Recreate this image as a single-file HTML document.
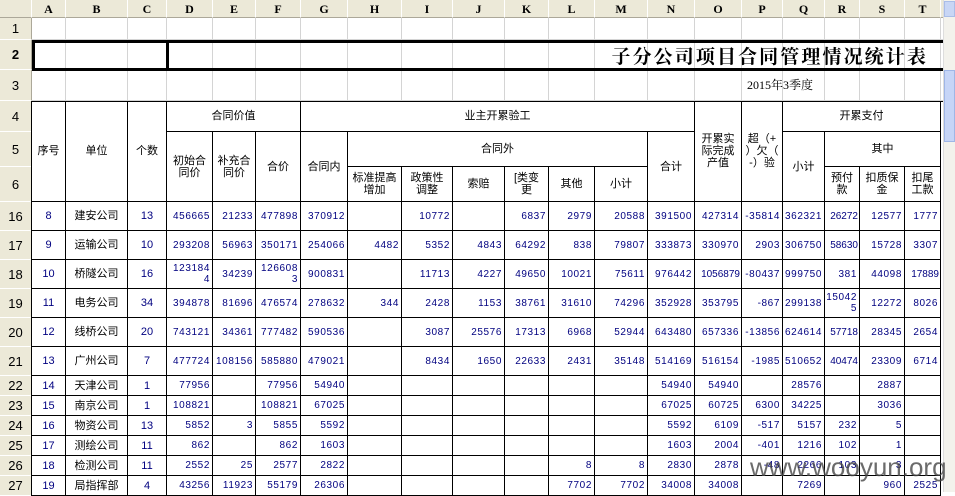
<!DOCTYPE html>
<html><head><meta charset="utf-8">
<style>
*{margin:0;padding:0;box-sizing:border-box}
body{width:955px;height:492px;overflow:hidden;background:#fff;position:relative;font-family:"Liberation Sans","Noto Sans CJK SC",sans-serif}
.a{position:absolute}
.ch{position:absolute;top:0;height:18px;background:#ece9d8;border-right:1px solid #fff;border-bottom:1px solid #aca899;font:bold 12px "Liberation Serif",serif;text-align:center;line-height:18px;color:#000}
.rh{position:absolute;left:0;width:32px;background:#ece9d8;border-bottom:1px solid #fff;border-right:1px solid #aca899;font:13px "Liberation Sans",sans-serif;text-align:center;color:#000;display:flex;align-items:center;justify-content:center}
.c{position:absolute;border-right:1px solid #000;border-bottom:1px solid #000;display:flex;align-items:center;justify-content:center;text-align:center;font-size:11px;line-height:12px;color:#000;font-family:"Liberation Sans","Noto Sans CJK SC",sans-serif}
.b{color:#000080}
.n{position:absolute;border-right:1px solid #000;border-bottom:1px solid #000;display:flex;align-items:center;justify-content:flex-end;text-align:right;padding-right:2px;font-size:10px;line-height:11px;color:#000080;letter-spacing:0.6px;font-family:"Liberation Sans",sans-serif;white-space:nowrap;overflow:hidden}
.g{position:absolute;background:#d4d4d4}
.title{position:absolute;left:560px;top:43px;width:368px;height:25px;font-weight:bold;font-size:19px;font-family:"Noto Serif CJK SC","Noto Sans CJK SC",serif;letter-spacing:2.1px;text-align:right;line-height:25px;color:#000;white-space:nowrap}
.yr{position:absolute;left:700px;top:76px;width:160px;height:18px;font-size:12px;font-family:"Liberation Serif","Noto Serif CJK SC",serif;text-align:center;color:#000;line-height:18px}
.wm{position:absolute;left:750px;top:449px;width:205px;height:36px;font-size:26px;font-family:"Liberation Sans",sans-serif;color:rgba(70,70,70,0.8);white-space:nowrap;line-height:36px}
</style></head><body>
<div id="root"></div>
<div class="title">子分公司项目合同管理情况统计表</div>
<div class="yr">2015年3季度</div>
<div class="wm">www.wooyun.org</div>
<script>
var xs=[32,66,128,167,213,256,301,348,402,453,505,549,595,648,695,742,783,825,860,905,941];
var L="ABCDEFGHIJKLMNOPQRST";
var h='';
function d(cls,x,y,w,hh,t,st){h+='<div class="'+cls+'" style="left:'+x+'px;top:'+y+'px;width:'+w+'px;height:'+hh+'px;'+(st||'')+'">'+(t||'')+'</div>';}
d('ch',0,0,32,18,'');
for(var i=0;i<20;i++)d('ch',xs[i],0,xs[i+1]-xs[i],18,L[i]);
d('ch',941,0,4,18,'');
for(var i=0;i<21;i++)d('g',xs[i]-1,18,1,83);
d('g',32,39,913,1);d('g',32,100,913,1);
var rh=[[1,18,40],[2,40,70],[3,70,101],[4,101,132],[5,132,167],[6,167,202]];
var dys=[202,231,260,289,318,347,376,396,416,436,456,476,496];
for(var i=0;i<12;i++)rh.push([16+i,dys[i],dys[i+1]]);
rh.forEach(function(r){d('rh',0,r[1],32,r[2]-r[1],''+r[0],r[0]==2?'font-weight:bold':'');});
d('a',32,40,911,3,'','background:#000');d('a',32,68,911,3,'','background:#000');
d('a',32,40,3,31,'','background:#000');d('a',166,40,3,31,'','background:#000');
d('a',31,101,912,1,'','background:#000');
d('a',31,101,1,395,'','background:#000');
function C(c1,c2,y1,y2,t,cls){d(cls||'c',xs[c1],y1,xs[c2+1]-xs[c1],y2-y1,t);}
C(0,0,101,202,'序号');C(1,1,101,202,'单位');C(2,2,101,202,'个数');
C(3,5,101,132,'合同价值');C(3,3,132,202,'初始合<br>同价');C(4,4,132,202,'补充合<br>同价');C(5,5,132,202,'合价');
C(6,13,101,132,'业主开累验工');C(6,6,132,202,'合同内');C(7,12,132,167,'合同外');
C(7,7,167,202,'标准提高<br>增加');C(8,8,167,202,'政策性<br>调整');C(9,9,167,202,'索赔');C(10,10,167,202,'[类变<br>更');C(11,11,167,202,'其他');C(12,12,167,202,'小计');
C(13,13,132,202,'合计');
C(14,14,101,202,'开累实<br>际完成<br>产值');C(15,15,101,202,'超（+<br>）欠（<br>-）验');
C(16,19,101,132,'开累支付');C(16,16,132,202,'小计');C(17,19,132,167,'其中');
C(17,17,167,202,'预付<br>款');C(18,18,167,202,'扣质保<br>金');C(19,19,167,202,'扣尾<br>工款');
var D=[
['8','建安公司','13','456665','21233','477898','370912','','10772','','6837','2979','20588','391500','427314','-35814','362321','26272','12577','1777'],
['9','运输公司','10','293208','56963','350171','254066','4482','5352','4843','64292','838','79807','333873','330970','2903','306750','58630','15728','3307'],
['10','桥隧公司','16','123184<br>4','34239','126608<br>3','900831','','11713','4227','49650','10021','75611','976442','1056879','-80437','999750','381','44098','17889'],
['11','电务公司','34','394878','81696','476574','278632','344','2428','1153','38761','31610','74296','352928','353795','-867','299138','15042<br>5','12272','8026'],
['12','线桥公司','20','743121','34361','777482','590536','','3087','25576','17313','6968','52944','643480','657336','-13856','624614','57718','28345','2654'],
['13','广州公司','7','477724','108156','585880','479021','','8434','1650','22633','2431','35148','514169','516154','-1985','510652','40474','23309','6714'],
['14','天津公司','1','77956','','77956','54940','','','','','','','54940','54940','','28576','','2887',''],
['15','南京公司','1','108821','','108821','67025','','','','','','','67025','60725','6300','34225','','3036',''],
['16','物资公司','13','5852','3','5855','5592','','','','','','','5592','6109','-517','5157','232','5',''],
['17','测绘公司','11','862','','862','1603','','','','','','','1603','2004','-401','1216','102','1',''],
['18','检测公司','11','2552','25','2577','2822','','','','','8','8','2830','2878','-48','2266','103','3',''],
['19','局指挥部','4','43256','11923','55179','26306','','','','','7702','7702','34008','34008','','7269','','960','2525']];
for(var r=0;r<12;r++){for(var c=0;c<20;c++){var t=D[r][c];
 var w=xs[c+1]-xs[c];
 var ls=(w<40&&t.length>=5&&t.indexOf('<')<0)?'letter-spacing:0;padding-right:1px;':'';
 if(t.length>=7&&t.indexOf('<')<0)ls='letter-spacing:0;padding-right:1px;';
 if(c==0||c==2)C(c,c,dys[r],dys[r+1],t,'c b');
 else if(c==1)C(c,c,dys[r],dys[r+1],t,'c');
 else d('n',xs[c],dys[r],w,dys[r+1]-dys[r],t,ls);}}
d('a',943,0,12,492,'','background:#f3f2ec;border-left:1px solid #ddd');
d('a',944,1,11,16,'','background:#c8d6f5;border:1px solid #a9bde8');
d('a',944,70,11,72,'','background:#c6d5f7;border:1px solid #9fb6e6');
document.getElementById('root').innerHTML=h;
</script>
</body></html>
